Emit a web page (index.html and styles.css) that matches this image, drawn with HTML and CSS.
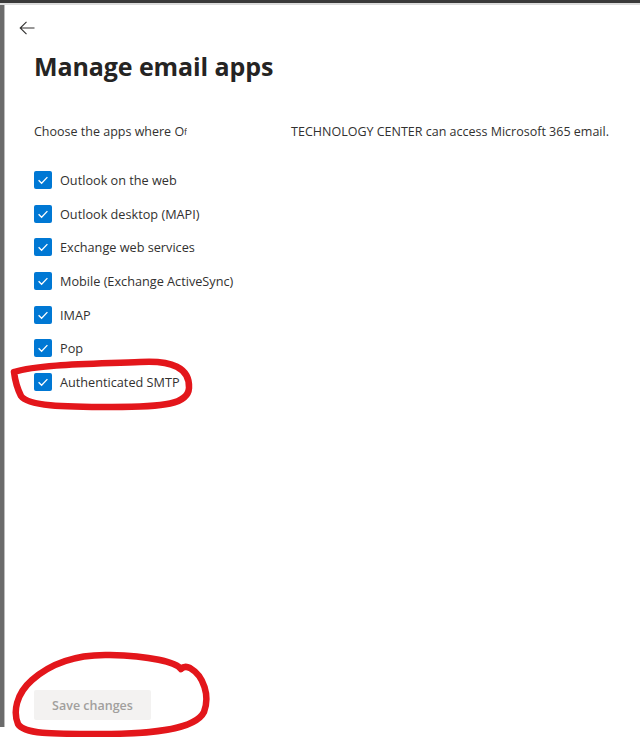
FILE: index.html
```html
<!DOCTYPE html>
<html lang="en">
<head>
<meta charset="utf-8">
<title>Manage email apps</title>
<link rel="stylesheet" href="styles.css">
</head>
<body>
<div class="topbar"></div>
<div class="page">
  <div class="strip"></div>
  <main class="panel">
    <button class="back" aria-label="Back">
      <svg width="16" height="16" viewBox="0 0 16 16"><path d="M15.5 8H1.2M7.5 1.8L1.2 8l6.3 6.2" fill="none" stroke="#323130" stroke-width="1.1"/></svg>
    </button>
    <h1 class="title">Manage email apps</h1>
    <p class="desc">Choose the apps where O<span class="cut">f</span><span class="redact"></span>TECHNOLOGY CENTER can access Microsoft 365 email.</p>
    <ul class="apps">
      <li class="app"><span class="box"><svg width="18" height="18" viewBox="0 0 18 18"><path d="M4.6 9.3l3 3 5.8-6.2" fill="none" stroke="#fff" stroke-width="1.3"/></svg></span>Outlook on the web</li>
      <li class="app"><span class="box"><svg width="18" height="18" viewBox="0 0 18 18"><path d="M4.6 9.3l3 3 5.8-6.2" fill="none" stroke="#fff" stroke-width="1.3"/></svg></span>Outlook desktop (MAPI)</li>
      <li class="app"><span class="box"><svg width="18" height="18" viewBox="0 0 18 18"><path d="M4.6 9.3l3 3 5.8-6.2" fill="none" stroke="#fff" stroke-width="1.3"/></svg></span>Exchange web services</li>
      <li class="app"><span class="box"><svg width="18" height="18" viewBox="0 0 18 18"><path d="M4.6 9.3l3 3 5.8-6.2" fill="none" stroke="#fff" stroke-width="1.3"/></svg></span>Mobile (Exchange ActiveSync)</li>
      <li class="app"><span class="box"><svg width="18" height="18" viewBox="0 0 18 18"><path d="M4.6 9.3l3 3 5.8-6.2" fill="none" stroke="#fff" stroke-width="1.3"/></svg></span>IMAP</li>
      <li class="app"><span class="box"><svg width="18" height="18" viewBox="0 0 18 18"><path d="M4.6 9.3l3 3 5.8-6.2" fill="none" stroke="#fff" stroke-width="1.3"/></svg></span>Pop</li>
      <li class="app"><span class="box"><svg width="18" height="18" viewBox="0 0 18 18"><path d="M4.6 9.3l3 3 5.8-6.2" fill="none" stroke="#fff" stroke-width="1.3"/></svg></span>Authenticated SMTP</li>
    </ul>
    <button class="save" disabled>Save changes</button>
  </main>
</div>
<svg class="marks" width="640" height="737" viewBox="0 0 640 737">
  <path d="M14 372C40 364 95 364 140 362C172 360 190 368 189 388C188 404 165 407 112 407C62 407 28 406 21 396C17 388 15 380 14 372" fill="none" stroke="#e3161b" stroke-width="6.5" stroke-linecap="round" stroke-linejoin="round"/>
  <path d="M181 669C176 662 150 656 110 655C75 654 50 664 32 680C16 694 13 712 18 724C24 734 50 734 100 734C150 734 195 730 204 712C210 696 204 676 190 668C186 666 183 667 181 669" fill="none" stroke="#e3161b" stroke-width="6.5" stroke-linecap="round" stroke-linejoin="round"/>
</svg>
</body>
</html>
```
FILE: styles.css
```css
* { box-sizing: border-box; }
html, body { margin: 0; padding: 0; background: #fff; }
body {
  width: 640px;
  height: 737px;
  overflow: hidden;
  position: relative;
  font-family: "Open Sans", "Noto Sans", "Liberation Sans", sans-serif;
  color: #323130;
}
.topbar {
  height: 5px;
  background: #3a3a3a;
  border-bottom: 2px solid #dcdcdc;
}
.page {
  display: flex;
  height: 732px;
}
.strip {
  width: 5px;
  background: #6b6b6b;
  border-right: 1px solid #bdbdbd;
  height: 722px;
}
.panel {
  flex: 1;
  display: flex;
  flex-direction: column;
  align-items: flex-start;
  padding: 0 0 17px 29px;
}
.back {
  margin: 15px 0 0 -15px;
  padding: 0;
  width: 16px;
  height: 16px;
  border: 0;
  background: none;
  display: flex;
}
.title {
  margin: 12px 0 0;
  font-size: 25px;
  line-height: 36px;
  font-weight: 700;
  color: #252423;
  letter-spacing: -0.1px;
}
.desc {
  margin: 38px 0 0;
  font-size: 12.5px;
  line-height: 20px;
  color: #323130;
  white-space: nowrap;
}
.cut {
  display: inline-block;
  width: 3px;
  overflow: hidden;
  vertical-align: top;
  font-size: 9px;
}
.redact {
  display: inline-block;
  width: 104px;
}
.apps {
  list-style: none;
  margin: 21px 0 0;
  padding: 0;
}
.app {
  height: 33.7px;
  display: flex;
  align-items: center;
  gap: 8px;
  font-size: 12.7px;
  color: #323130;
}
.box {
  width: 18px;
  height: 18px;
  border-radius: 2px;
  background: #0078d4;
  display: flex;
}
.save {
  margin-top: auto;
  width: 117px;
  height: 30px;
  border: 0;
  border-radius: 2px;
  background: #f3f2f1;
  color: #a19f9d;
  font-family: inherit;
  font-size: 12.5px;
  font-weight: 600;
  padding: 0;
}
.marks {
  position: absolute;
  left: 0;
  top: 0;
  pointer-events: none;
}
```
